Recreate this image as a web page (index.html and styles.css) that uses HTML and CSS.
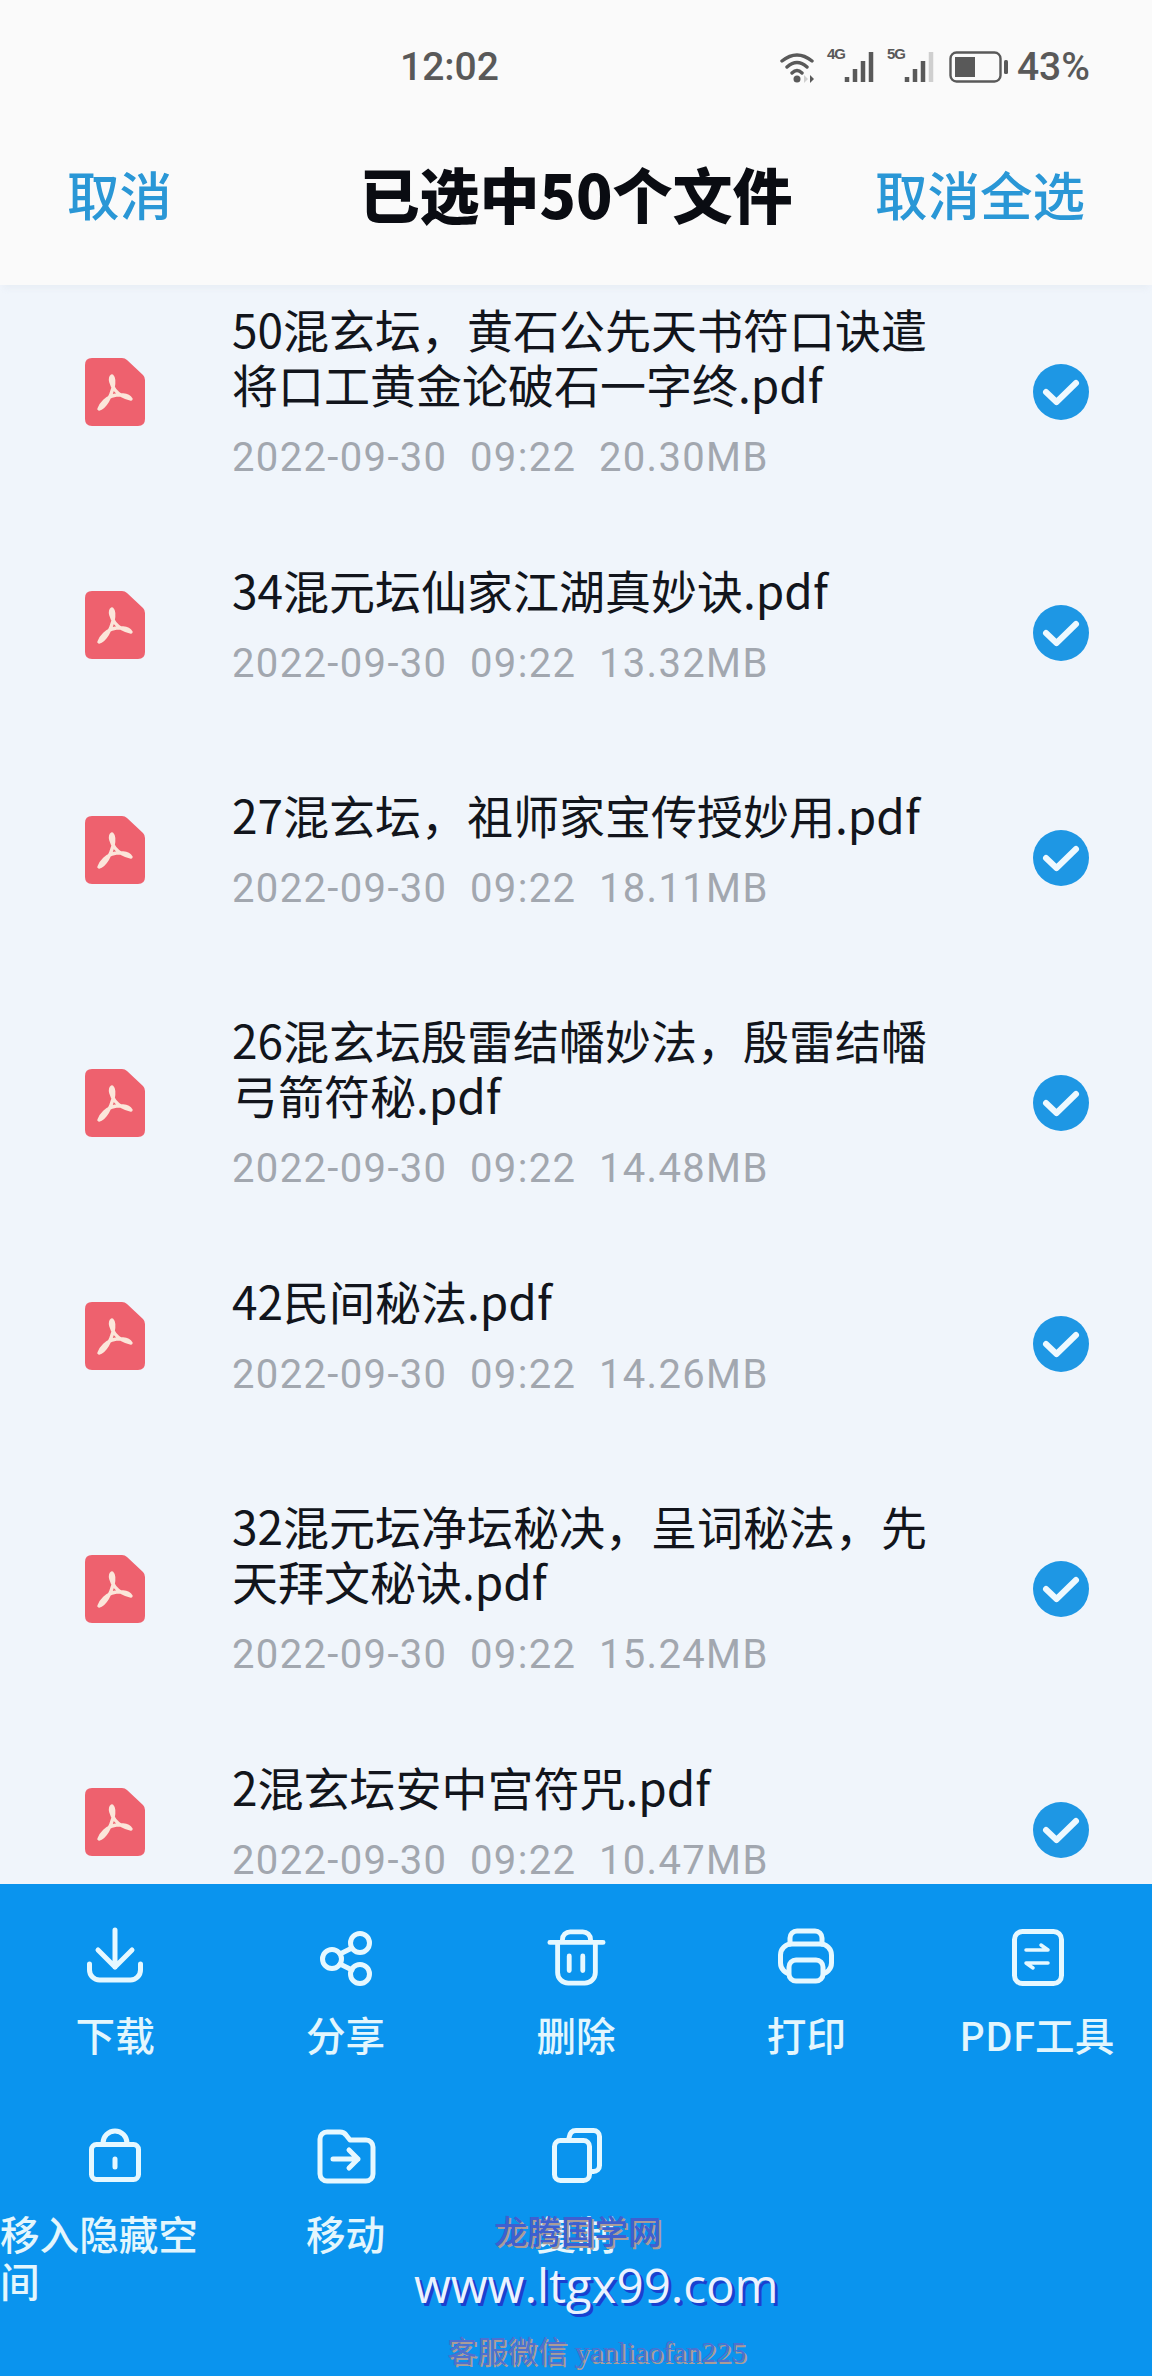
FILE: index.html
```html
<!DOCTYPE html>
<html lang="zh-CN">
<head>
    <meta charset="UTF-8">
    <meta name="viewport" content="width=device-width, initial-scale=1.0">
    <title>已选中50个文件</title>
    <link rel="stylesheet" href="styles.css">
</head>
<body>
<svg class="defs" width="0" height="0">
    <symbol id="pdf" viewBox="0 0 60 70">
        <path d="M7 1h30q3 0 5 2l16 15q2 2 2 5v39q0 7-7 7H7q-7 0-7-7V8q0-7 7-7z" fill="#ee616e"/>
        <path d="M27 19C24 21 26 28 30 33C34 38 41 41 46 42C43 37 34 37 27 39C22 41 16 46 14 52C20 51 26 39 28 31C29 26 29 21 27 19Z" fill="none" stroke="#fbe6da" stroke-width="3.4" stroke-linejoin="round"/>
    </symbol>
    <symbol id="check" viewBox="0 0 56 56">
        <circle cx="28" cy="28" r="28" fill="#1e97e4"/>
        <path d="M13 28l10.500 10L43 19" fill="none" stroke="#eef9ff" stroke-width="6" stroke-linecap="round" stroke-linejoin="round"/>
    </symbol>
</svg>

<div class="page">
    <div class="status">
        <span class="time">12:02</span>
        <div class="status-icons">
            <svg class="wifi" width="38" height="34" viewBox="0 0 38 34">
                <path d="M2 11Q17-1 32 11M7 17Q17 8 27 17M12 23Q17 18 22 23" fill="none" stroke="#595959" stroke-width="3.400" stroke-linecap="round"/>
                <circle cx="17" cy="29" r="3.500" fill="#595959"/>
                <path d="M24 25v8l4-4z" fill="#cfcfcf"/>
                <path d="M30 25v8l4-4z" fill="#595959"/>
            </svg>
            <span class="net">4G</span>
            <svg class="signal" width="34" height="32" viewBox="0 0 34 32"><path d="M3 26v5M11 18v13M19 10v21M27 1v30" stroke="#595959" stroke-width="4.500"/></svg>
            <span class="net">5G</span>
            <svg class="signal" width="34" height="32" viewBox="0 0 34 32"><path d="M3 26v5M11 18v13M19 10v21" stroke="#595959" stroke-width="4.500"/><path d="M27 1v30" stroke="#cfcfcf" stroke-width="4.500"/></svg>
            <svg class="battery" width="60" height="32" viewBox="0 0 60 32">
                <rect x="1.500" y="1.500" width="50" height="29" rx="6" fill="none" stroke="#595959" stroke-width="2.400"/>
                <rect x="6" y="6" width="20" height="20" fill="#595959"/>
                <rect x="55" y="9" width="4" height="14" rx="1.500" fill="#595959"/>
            </svg>
            <span class="percent">43%</span>
        </div>
    </div>

    <header class="header">
        <span class="link">取消</span>
        <h1>已选中50个文件</h1>
        <span class="link right">取消全选</span>
    </header>

    <main class="list">
        <div class="row two">
            <svg class="file-icon"><use href="#pdf"/></svg>
            <div class="info">
                <div class="name">50混玄坛，黄石公先天书符口诀遣将口工黄金论破石一字终.pdf</div>
                <div class="meta">2022-09-30&nbsp;&nbsp;09:22&nbsp;&nbsp;20.30MB</div>
            </div>
            <svg class="tick"><use href="#check"/></svg>
        </div>
        <div class="row">
            <svg class="file-icon"><use href="#pdf"/></svg>
            <div class="info">
                <div class="name">34混元坛仙家江湖真妙诀.pdf</div>
                <div class="meta">2022-09-30&nbsp;&nbsp;09:22&nbsp;&nbsp;13.32MB</div>
            </div>
            <svg class="tick"><use href="#check"/></svg>
        </div>
        <div class="row">
            <svg class="file-icon"><use href="#pdf"/></svg>
            <div class="info">
                <div class="name">27混玄坛，祖师家宝传授妙用.pdf</div>
                <div class="meta">2022-09-30&nbsp;&nbsp;09:22&nbsp;&nbsp;18.11MB</div>
            </div>
            <svg class="tick"><use href="#check"/></svg>
        </div>
        <div class="row two">
            <svg class="file-icon"><use href="#pdf"/></svg>
            <div class="info">
                <div class="name">26混玄坛殷雷结幡妙法，殷雷结幡弓箭符秘.pdf</div>
                <div class="meta">2022-09-30&nbsp;&nbsp;09:22&nbsp;&nbsp;14.48MB</div>
            </div>
            <svg class="tick"><use href="#check"/></svg>
        </div>
        <div class="row">
            <svg class="file-icon"><use href="#pdf"/></svg>
            <div class="info">
                <div class="name">42民间秘法.pdf</div>
                <div class="meta">2022-09-30&nbsp;&nbsp;09:22&nbsp;&nbsp;14.26MB</div>
            </div>
            <svg class="tick"><use href="#check"/></svg>
        </div>
        <div class="row two">
            <svg class="file-icon"><use href="#pdf"/></svg>
            <div class="info">
                <div class="name">32混元坛净坛秘决，呈词秘法，先天拜文秘诀.pdf</div>
                <div class="meta">2022-09-30&nbsp;&nbsp;09:22&nbsp;&nbsp;15.24MB</div>
            </div>
            <svg class="tick"><use href="#check"/></svg>
        </div>
        <div class="row">
            <svg class="file-icon"><use href="#pdf"/></svg>
            <div class="info">
                <div class="name">2混玄坛安中宫符咒.pdf</div>
                <div class="meta">2022-09-30&nbsp;&nbsp;09:22&nbsp;&nbsp;10.47MB</div>
            </div>
            <svg class="tick"><use href="#check"/></svg>
        </div>
    </main>

    <footer class="actions">
        <div class="action">
            <svg class="action-icon" viewBox="0 0 60 60"><path d="M30 4v37M13 24l17 17 17-17M4.500 38v6a10 10 0 0 0 10 10h31a10 10 0 0 0 10-10v-6"/></svg>
            <span class="label">下载</span>
        </div>
        <div class="action">
            <svg class="action-icon" viewBox="0 0 60 60"><circle cx="44" cy="17" r="9.500"/><circle cx="16" cy="33" r="9.500"/><circle cx="44" cy="48" r="9.500"/><path d="M24 28l12-6M24 38l12 6"/></svg>
            <span class="label">分享</span>
        </div>
        <div class="action">
            <svg class="action-icon" viewBox="0 0 60 62"><path d="M3 17h55M16 17v-3a8 8 0 0 1 8-8h13a8 8 0 0 1 8 8v3M11 17v31a11 11 0 0 0 11 11h17a11 11 0 0 0 11-11V17M23 31v15M37 31v15"/></svg>
            <span class="label">删除</span>
        </div>
        <div class="action">
            <svg class="action-icon" viewBox="0 0 60 60"><path d="M14 18v-6a7 7 0 0 1 7-7h18a7 7 0 0 1 7 7v6"/><rect x="4.500" y="18" width="51" height="30" rx="11"/><rect class="cover" x="13" y="34" width="34" height="21" rx="7"/></svg>
            <span class="label">打印</span>
        </div>
        <div class="action">
            <svg class="action-icon" viewBox="0 0 60 60"><rect x="7.500" y="5.500" width="47" height="52" rx="8"/><path class="thin" d="M19 24h22l-7-5M41 37H19l7 5"/></svg>
            <span class="label">PDF工具</span>
        </div>
        <div class="action">
            <svg class="action-icon" viewBox="0 0 60 60"><rect x="6.500" y="19.500" width="47" height="35" rx="5"/><path d="M18 19v-1a12 12 0 0 1 24 0v1M30 34v8"/></svg>
            <span class="label">移入隐藏空间</span>
        </div>
        <div class="action">
            <svg class="action-icon" viewBox="0 0 60 60"><path d="M4 14a7 7 0 0 1 7-7h13q4 0 6 3l4 5h16a7 7 0 0 1 7 7v27a7 7 0 0 1-7 7H11a7 7 0 0 1-7-7zM17 34h25M33 25l9 9-9 9"/></svg>
            <span class="label">移动</span>
        </div>
        <div class="action">
            <svg class="action-icon" viewBox="0 0 60 60"><rect x="8.500" y="15.500" width="35" height="40" rx="6"/><path d="M23 13q1-7.500 7-7.500h17.500a6 6 0 0 1 6 6v29a6 6 0 0 1-6 6h-3"/></svg>
            <span class="label">复制</span>
        </div>

        <span class="wm wm-title">龙腾国学网</span>
        <span class="wm wm-url">www.ltgx99.com</span>
        <span class="wm wm-contact">客服微信 yanliaofan225</span>
    </footer>
</div>
</body>
</html>
```

FILE: styles.css
```css
* {
    box-sizing: border-box;
}

body {
    margin: 0;
    font-family: "Noto Sans CJK SC", "Noto Sans", sans-serif;
    background-color: #fafafa;
}

.defs {
    position: absolute;
}

.page {
    width: 1152px;
    height: 2376px;
    display: flex;
    flex-direction: column;
    overflow: hidden;
}

/* status bar */
.status {
    height: 134px;
    flex: none;
    display: flex;
    align-items: center;
    justify-content: space-between;
    padding: 0 62px 0 400px;
    background-color: #fafafa;
    color: #595959;
}

.time {
    font-family: Roboto, sans-serif;
    font-size: 39px;
    font-weight: 500;
}

.status-icons {
    display: flex;
    align-items: center;
}

.net {
    font-family: "Liberation Sans", sans-serif;
    font-size: 15px;
    font-weight: 700;
    letter-spacing: -1px;
    align-self: flex-start;
    margin: 1px -1px 0 9px;
}

.battery {
    margin-left: 11px;
}

.percent {
    font-family: Roboto, sans-serif;
    font-size: 39px;
    font-weight: 500;
    margin-left: 8px;
}

/* header */
.header {
    height: 151px;
    flex: none;
    display: grid;
    grid-template-columns: 1fr auto 1fr;
    align-items: center;
    padding: 0 67px 33px;
    background-color: #fafafa;
    box-shadow: 0 7px 6px -4px rgba(225, 232, 240, 0.6);
    position: relative;
}

.link {
    font-size: 52.5px;
    font-weight: 500;
    line-height: 60px;
    color: #2a97d6;
}

.link.right {
    text-align: right;
}

.header h1 {
    margin: 0;
    font-size: 60px;
    line-height: 70px;
    font-weight: 900;
    color: #0a0c12;
}

/* file list */
.list {
    flex: 1;
    min-height: 0;
    overflow: hidden;
    padding-top: 16px;
    background-color: #f0f5fb;
}

.row {
    height: 225px;
    display: flex;
    align-items: flex-start;
    padding: 0 63px 0 85px;
}

.row.two {
    height: 261px;
}

.file-icon {
    width: 60px;
    height: 70px;
    flex: none;
    margin-top: 28px;
}

.row.two .file-icon {
    margin-top: 56px;
}

.info {
    width: 704px;
    flex: none;
    margin-left: 87px;
}

.name {
    font-size: 46px;
    line-height: 55px;
    color: #12151c;
}

.meta {
    margin-top: 19px;
    font-family: Roboto, sans-serif;
    font-size: 40px;
    letter-spacing: 1.35px;
    line-height: 55px;
    color: #a2a7af;
    white-space: nowrap;
}

.tick {
    width: 56px;
    height: 56px;
    flex: none;
    margin-left: auto;
    margin-top: 43px;
}

.row.two .tick {
    margin-top: 63px;
}

/* bottom actions */
.actions {
    height: 492px;
    flex: none;
    position: relative;
    display: grid;
    grid-template-columns: repeat(5, 1fr);
    grid-auto-rows: 199px;
    padding-top: 42px;
    background-color: #0a94ee;
}

.action {
    display: flex;
    flex-direction: column;
    align-items: center;
}

.action-icon {
    width: 60px;
    height: 60px;
    flex: none;
    overflow: visible;
    fill: none;
    stroke: #e6f8ff;
    stroke-width: 5;
    stroke-linecap: round;
    stroke-linejoin: round;
}

.action-icon .cover {
    fill: #0a94ee;
}

.action-icon .thin {
    stroke-width: 3.5;
}

.label {
    margin-top: 24px;
    font-size: 39.6px;
    line-height: 47px;
    font-weight: 500;
    color: #e3f6fd;
}

/* watermark over the bar */
.wm {
    position: absolute;
    white-space: nowrap;
}

.wm-title {
    left: 494px;
    top: 325px;
    font-size: 33.5px;
    font-weight: 500;
    line-height: 42px;
    color: #3f5fd0;
    text-shadow: 2px 2px 0 #ab9c98;
}

.wm-url {
    left: 414px;
    top: 367px;
    font-family: "Open Sans", sans-serif;
    font-size: 47.5px;
    line-height: 68px;
    color: #eaf2ff;
    text-shadow: 3px 3px 0 #1a40d0;
}

.wm-contact {
    left: 447px;
    top: 448px;
    font-family: "Liberation Serif", "Noto Sans CJK SC", serif;
    font-size: 30px;
    line-height: 40px;
    color: #4f70cf;
    text-shadow: 2px 2px 0 #ab9c98;
}
```
